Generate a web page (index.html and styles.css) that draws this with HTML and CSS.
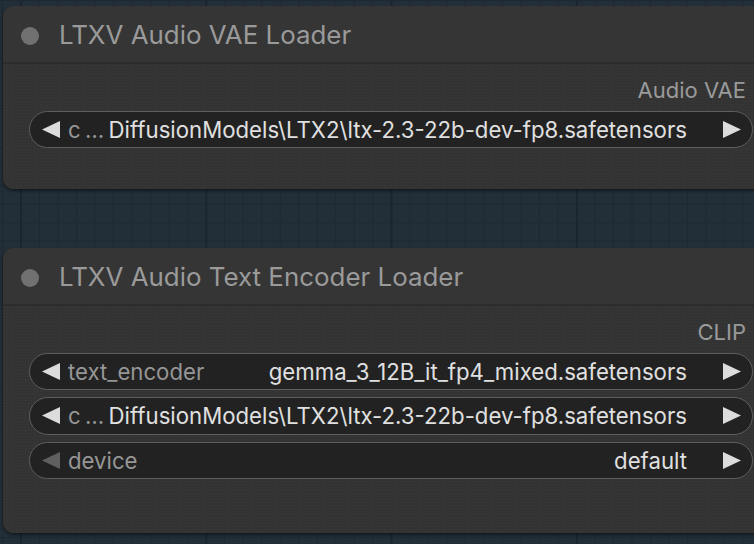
FILE: index.html
```html
<!DOCTYPE html>
<html lang="en">
<head>
<meta charset="utf-8">
<title>Audio loaders</title>
<link rel="stylesheet" href="styles.css">
</head>
<body>
<main class="canvas">
  <section class="node node-vae">
    <header class="node-title">
      <span class="node-dot"></span>
      <span class="node-name">LTXV Audio VAE Loader</span>
    </header>
    <div class="node-body">
      <div class="output">Audio VAE</div>
      <div class="widgets">
        <div class="combo">
          <svg class="arrow" viewBox="0 0 18 17"><polygon points="0,8.5 18,0 18,17"/></svg>
          <span class="combo-label cut">c …</span>
          <span class="combo-value">DiffusionModels\LTX2\ltx-2.3-22b-dev-fp8.safetensors</span>
          <svg class="arrow" viewBox="0 0 18 17"><polygon points="18,8.5 0,0 0,17"/></svg>
        </div>
      </div>
    </div>
  </section>

  <section class="node node-encoder">
    <header class="node-title">
      <span class="node-dot"></span>
      <span class="node-name">LTXV Audio Text Encoder Loader</span>
    </header>
    <div class="node-body">
      <div class="output">CLIP</div>
      <div class="widgets">
        <div class="combo">
          <svg class="arrow" viewBox="0 0 18 17"><polygon points="0,8.5 18,0 18,17"/></svg>
          <span class="combo-label">text_encoder</span>
          <span class="combo-value">gemma_3_12B_it_fp4_mixed.safetensors</span>
          <svg class="arrow" viewBox="0 0 18 17"><polygon points="18,8.5 0,0 0,17"/></svg>
        </div>
        <div class="combo">
          <svg class="arrow" viewBox="0 0 18 17"><polygon points="0,8.5 18,0 18,17"/></svg>
          <span class="combo-label cut">c …</span>
          <span class="combo-value">DiffusionModels\LTX2\ltx-2.3-22b-dev-fp8.safetensors</span>
          <svg class="arrow" viewBox="0 0 18 17"><polygon points="18,8.5 0,0 0,17"/></svg>
        </div>
        <div class="combo">
          <svg class="arrow arrow-off" viewBox="0 0 18 17"><polygon points="0,8.5 18,0 18,17"/></svg>
          <span class="combo-label">device</span>
          <span class="combo-value">default</span>
          <svg class="arrow" viewBox="0 0 18 17"><polygon points="18,8.5 0,0 0,17"/></svg>
        </div>
      </div>
    </div>
  </section>
</main>
</body>
</html>
```

FILE: styles.css
```css
html, body {
  margin: 0;
  height: 100%;
  overflow: hidden;
}

body {
  font-family: Inter, "Noto Sans", sans-serif;
  background-color: #222e38;
  /* graph paper: minor lines every 18.53px, major every 10 cells */
  background-image:
    linear-gradient(to right, #1b252e 0 2px, transparent 2px),
    linear-gradient(to right, #1e2832 0 1px, transparent 1px),
    linear-gradient(to bottom, #1e2832 0 1px, transparent 1px);
  background-size: 185.3px 100%, 18.53px 100%, 100% 18.53px;
  background-position: 20px 0, 2px 0, 0 0;
}

.canvas {
  display: flex;
  flex-direction: column;
  gap: 59px;
  padding: 6px 0 0 3px;
  width: 764px;
}

.node {
  background: #353535;
  border-radius: 11px;
  box-shadow: 0 2px 3px rgba(0, 0, 0, 0.45);
  overflow: hidden;
}

.node-vae { height: 183px; }
.node-encoder { height: 285px; }

.node-title {
  display: flex;
  align-items: center;
  height: 53px;
  padding-top: 3px;
  padding-left: 18px;
  gap: 20px;
  border-bottom: 2px solid #2c2c2c;
}

.node-dot {
  width: 18px;
  height: 18px;
  border-radius: 50%;
  background: #717171;
}

.node-name {
  font-size: 25.9px;
  color: #9a9a9a;
  margin-top: -2px;
}

.node-body {
  padding: 13.5px 0 0 26px;
  background-color: #333;
  background-image: radial-gradient(rgba(255, 255, 255, 0.035) 0.6px, transparent 0.9px);
  background-size: 3px 3px;
  height: 100%;
}

.output {
  text-align: right;
  padding-right: 21px;
  font-size: 22px;
  line-height: 24px;
  color: #9a9a9a;
  margin-bottom: 9px;
}

.widgets {
  display: flex;
  flex-direction: column;
  gap: 7px;
  width: 724px;
}

.combo {
  box-sizing: border-box;
  height: 37.5px;
  display: flex;
  align-items: center;
  padding: 0 11px 0 12px;
  background: #222;
  border: 1.5px solid #5e5e5e;
  border-radius: 19px;
  font-size: 22.2px;
}

.arrow {
  width: 18px;
  height: 17px;
  fill: #dcdcdc;
  flex: none;
}

.arrow-off { fill: #5f5f5f; }

.combo-label {
  color: #969696;
  margin-left: 8px;
  white-space: nowrap;
}

/* label shortened to fit beside a long value */
.combo-label.cut {
  letter-spacing: -1px;
  margin-right: 4px;
}

.combo-value {
  flex: 1;
  text-align: right;
  color: #e0e0e0;
  margin-right: 36px;
  white-space: nowrap;
}
```
